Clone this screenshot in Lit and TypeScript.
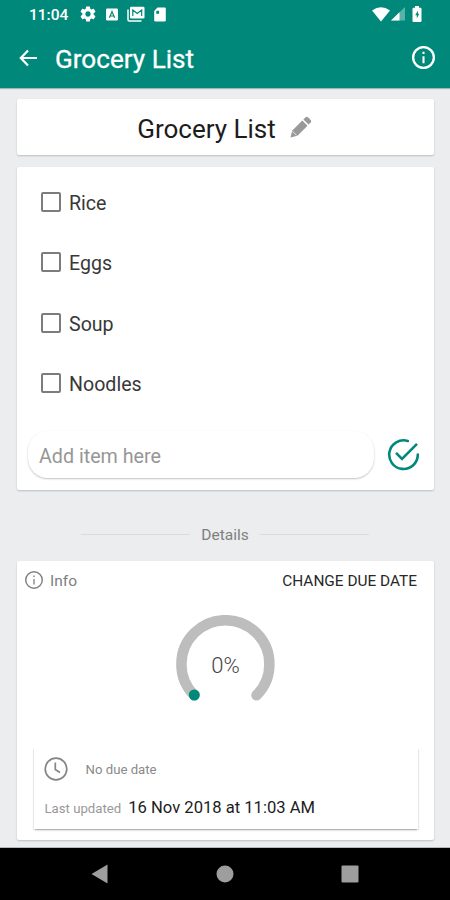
import { LitElement, html, css, svg } from "lit";
import { customElement, property, state } from "lit/decorators.js";

@customElement("status-bar")
class StatusBar extends LitElement {
  static styles = css`
    :host { display: flex; height: 28px; color: #fff; }
    .bar { display: flex; align-items: center; width: 100%; padding: 0 27px 0 29px; box-sizing: border-box; }
    .time { font: 500 15.5px/28px Roboto, sans-serif; width: 51px; white-space: nowrap; padding-top: 1px; }
    svg { display: block; fill: #fff; }
    .app { margin-left: 10px; }
    .mail { margin-left: 9px; }
    .sd { margin-left: 9px; }
    .grow { flex: 1; }
    .signal { margin-left: 1px; }
    .battery { margin-left: 7px; margin-right: 1px; }
  `;
  render() {
    return html`<div class="bar">
      <span class="time">11:04</span>
      <svg width="16" height="16" viewBox="1.500 1.500 21 21"><path d="M19.43 12.98c.04-.32.07-.64.07-.98s-.03-.66-.07-.98l2.11-1.65c.19-.15.24-.42.12-.64l-2-3.46c-.12-.22-.39-.3-.61-.22l-2.49 1c-.52-.4-1.08-.73-1.69-.98l-.38-2.65C14.46 2.18 14.25 2 14 2h-4c-.25 0-.46.18-.49.42l-.38 2.65c-.61.25-1.17.59-1.69.98l-2.49-1c-.23-.09-.49 0-.61.22l-2 3.46c-.13.22-.07.49.12.64l2.11 1.65c-.04.32-.07.65-.07.98s.03.66.07.98l-2.11 1.65c-.19.15-.24.42-.12.64l2 3.46c.12.22.39.3.61.22l2.49-1c.52.4 1.08.73 1.69.98l.38 2.65c.03.24.24.42.49.42h4c.25 0 .46-.18.49-.42l.38-2.65c.61-.25 1.17-.59 1.69-.98l2.49 1c.23.09.49 0 .61-.22l2-3.46c.12-.22.07-.49-.12-.64l-2.11-1.65zM12 15.5c-1.93 0-3.5-1.57-3.5-3.5s1.57-3.5 3.5-3.5 3.5 1.57 3.5 3.5-1.57 3.5-3.5 3.5z"/></svg>
      <svg class="app" width="12" height="13" viewBox="0 0 12 13"><rect y=".5" width="12" height="12" rx="1.3"/><path d="M3.4 9.700 6 3.600l2.600 6.100M4.300 8h3.400" fill="none" stroke="#00897b" stroke-width="1.200"/></svg>
      <svg class="mail" width="18" height="16" viewBox="0 0 18 16"><path d="M1 3.500V13.700q0 1.300 1.300 1.300H14.500" fill="none" stroke="#fff" stroke-width="1.500"/><rect x="3" y=".8" width="14.500" height="11.700" rx="1.300"/><path d="M5.800 10V4L10.200 7.500 14.700 4v6" fill="none" stroke="#00897b" stroke-width="1.200"/></svg>
      <svg class="sd" width="12" height="15" viewBox="0 0 12 15"><path d="M3.500.5h7q1.300 0 1.300 1.300v11.400q0 1.300-1.300 1.300h-9Q.2 14.500.2 13.200V4z"/><path d="M2.300 3.800h2.800v3H2.300z" fill="#00897b"/></svg>
      <span class="grow"></span>
      <svg width="18" height="15" viewBox="0 0 18 15"><path d="M0 3.600Q9-3 18 3.600L9 14.600z"/></svg>
      <svg class="signal" width="14" height="14" viewBox="0 0 14 14"><path d="M0 13.500 14 0v13.500z" opacity=".35"/><path d="M0 13.500 8.500 5.300v8.200z"/></svg>
      <svg class="battery" width="10" height="16" viewBox="0 0 10 16"><path d="M3 0h4v1.800h1.500q1 0 1 1V15q0 1-1 1h-7q-1 0-1-1V2.800q0-1 1-1H3z"/><path d="M5.900 4.500 3.200 9.300h1.600V12.500l2.500-4.700H5.900z" fill="#00897b"/></svg>
    </div>`;
  }
}

@customElement("info-icon")
class InfoIcon extends LitElement {
  @property({ type: Number }) size = 24;
  @property({ type: Number }) weight = 2;
  static styles = css`:host { display: block; } svg { display: block; }`;
  render() {
    return html`<svg width=${this.size} height=${this.size} viewBox="2 2 20 20">
      <circle cx="12" cy="12" r=${10 - this.weight / 2} fill="none" stroke="currentColor" stroke-width=${this.weight} />
      <path d="M12 11v6M12 7v2" stroke="currentColor" stroke-width=${this.weight * 0.9} /></svg>`;
  }
}

@customElement("progress-gauge")
class ProgressGauge extends LitElement {
  @property({ type: Number }) value = 0;
  static styles = css`
    :host { display: grid; width: 100px; height: 100px; place-items: center; }
    svg, span { grid-area: 1 / 1; }
    svg { display: block; }
    span { font: 300 22px/26px Roboto, sans-serif; color: #444; padding: 2px 0 0 1px; }
  `;
  render() {
    return html`<svg width="100" height="100" viewBox="0 0 100 100">
        ${svg`<path d="M19.300 80.300A44 44 0 1 1 81.500 80.300" fill="none" stroke="#bdbdbd" stroke-width="10.500" stroke-linecap="round"/>
        <circle cx="19.300" cy="80" r="5.500" fill="#00897b"/>`}
      </svg><span>${this.value}%</span>`;
  }
}

@customElement("app-root")
class AppRoot extends LitElement {
  @state() private items = ["Rice", "Eggs", "Soup", "Noodles"];
  static styles = css`
    :host { display: flex; flex-direction: column; height: 900px; width: 450px; overflow: hidden; background: #ebedee; font-family: Roboto, sans-serif; }
    svg { display: block; }
    .top { height: 87.500px; background: #00897b; flex: none; box-shadow: 0 1px 1px rgba(0,60,55,.3); }
    .appbar { display: flex; align-items: center; height: 59px; padding: 0 15px 0 19px; color: #fff; }
    .appbar h1 { flex: 1; margin: 0 0 0 18px; font: 400 26.100px/30px Roboto, sans-serif; -webkit-text-stroke: .3px #fff; white-space: nowrap; padding-top: 2px; }
    main { flex: 1; display: flex; flex-direction: column; padding: 11px 16px 0 17px; }
    .card { background: #fff; border-radius: 2px; box-shadow: 0 1px 2px rgba(0,0,0,.2); }
    .title { height: 56.500px; box-sizing: border-box; display: flex; align-items: center; justify-content: center; gap: 14px; padding-right: 2px; font-size: 26px; color: #1c1c1c; }
    .title span { white-space: nowrap; padding-top: 4px; }
    .list { height: 323px; margin-top: 12px; display: flex; flex-direction: column; }
    ul { list-style: none; margin: 0; padding: 5px 0 0 24px; }
    li { display: flex; align-items: center; height: 60.300px; gap: 8px; font-size: 19.600px; color: #383838; }
    .box { box-sizing: border-box; width: 20px; height: 20px; border: 2px solid #7c7c7c; border-radius: 2px; }
    li span { padding-top: 3px; }
    .add { display: flex; align-items: center; margin: 17.500px 14px 0 10.500px; gap: 13px; }
    .field { flex: 1; height: 47px; box-sizing: border-box; border-radius: 20px; padding: 2px 0 0 11.500px; font-size: 19.700px; line-height: 47px; color: #969696; box-shadow: 0 1px 2px rgba(0,0,0,.24); }
    .divider { display: flex; align-items: center; justify-content: center; gap: 11px; height: 20px; margin-top: 34px; padding-right: 1px; font-size: 15.500px; color: #7f7f7f; }
    .divider span { padding-top: 1px; }
    .divider i { width: 109px; height: 1px; background: #d9dbdc; }
    .details { height: 279px; margin-top: 17px; box-sizing: border-box; display: flex; flex-direction: column; align-items: center; }
    .head { width: 100%; box-sizing: border-box; display: flex; align-items: center; height: 38px; padding: 0 17px 0 7.500px; color: #808080; }
    .head .info { flex: 1; margin-left: 7.500px; padding-top: 2px; font-size: 15.500px; }
    .head b { font: 400 15.400px/20px Roboto, sans-serif; color: #282828; padding-top: 1px; }
    progress-gauge { margin: 16px 1px 0 0; }
    .dates { align-self: stretch; margin: 32.500px 16.500px 0; height: 81px; box-sizing: border-box; padding: 8.500px 0 0 10px; box-shadow: 0 2px 2px -1px rgba(0,0,0,.24), 1px 1px 1px rgba(0,0,0,.08), -1px 1px 1px rgba(0,0,0,.08); }
    .due { display: flex; align-items: center; height: 25px; gap: 18px; font-size: 13.200px; color: #8a8a8a; }
    .due span { padding-top: 1px; }
    .updated { display: flex; align-items: baseline; gap: 7px; margin: 14.500px 0 0 1px; line-height: 24px; white-space: nowrap; font-size: 13.200px; color: #999; }
    .updated b { font-weight: 400; font-size: 16.600px; color: #1c1c1c; }
    nav { height: 52px; flex: none; background: #000; display: flex; align-items: center; box-shadow: 0 -1px 0 #b4b8b8; }
    nav svg { width: 450px; height: 52px; fill: #9e9e9e; }
  `;
  render() {
    return html`
      <div class="top">
        <status-bar></status-bar>
        <div class="appbar">
          <svg width="18" height="18" viewBox="0 0 18 18"><path d="M9 1.500 1.800 9 9 16.500M1.800 9H18" fill="none" stroke="#fff" stroke-width="2.200"/></svg>
          <h1>Grocery List</h1>
          <info-icon .size=${23} .weight=${2}></info-icon>
        </div>
      </div>
      <main>
        <section class="card title">
          <span>Grocery List</span>
          <svg width="22" height="22" viewBox="0 0 22 22" fill="#999"><path d="M.5 21.500 2.300 14.500 12.300 4.500 17.500 9.700 7.500 19.700z"/><path d="M13.400 3.400 15.500 1.300q1.200-1.200 2.400 0l2.800 2.800q1.200 1.200 0 2.400L18.600 8.600z"/><path d="M2.600 15.300 6.700 19.400" stroke="#fff" stroke-width=".8"/></svg>
        </section>
        <section class="card list">
          <ul>${this.items.map((item) => html`<li><div class="box"></div><span>${item}</span></li>`)}</ul>
          <div class="add">
            <div class="field">Add item here</div>
            <svg width="33" height="33" viewBox="0 0 33 33" fill="none" stroke="#00897b" stroke-width="2.600"><path d="M20.800 3A14.300 14.300 0 1 0 30.800 16.500" stroke-linecap="round"/><path d="M9 14.800 15 20.800 30 5.800"/></svg>
          </div>
        </section>
        <div class="divider"><i></i><span>Details</span><i></i></div>
        <section class="card details">
          <div class="head"><info-icon .size=${18} .weight=${1.6}></info-icon><span class="info">Info</span><b>CHANGE DUE DATE</b></div>
          <progress-gauge .value=${0}></progress-gauge>
          <div class="dates">
            <div class="due"><svg width="24" height="24" viewBox="0 0 24 24" fill="none" stroke="#858585" stroke-width="1.700"><circle cx="12" cy="12" r="10.800"/><path d="M11.300 5.500v7l4.700 3"/></svg><span>No due date</span></div>
            <div class="updated"><span>Last updated</span><b>16 Nov 2018 at 11:03 AM</b></div>
          </div>
        </section>
      </main>
      <nav><svg viewBox="0 0 450 52"><path d="M91.500 26 107.500 16.500v19z"/><circle cx="225" cy="26" r="8.500"/><rect x="341.500" y="17.500" width="17" height="17" rx="1"/></svg></nav>`;
  }
}
